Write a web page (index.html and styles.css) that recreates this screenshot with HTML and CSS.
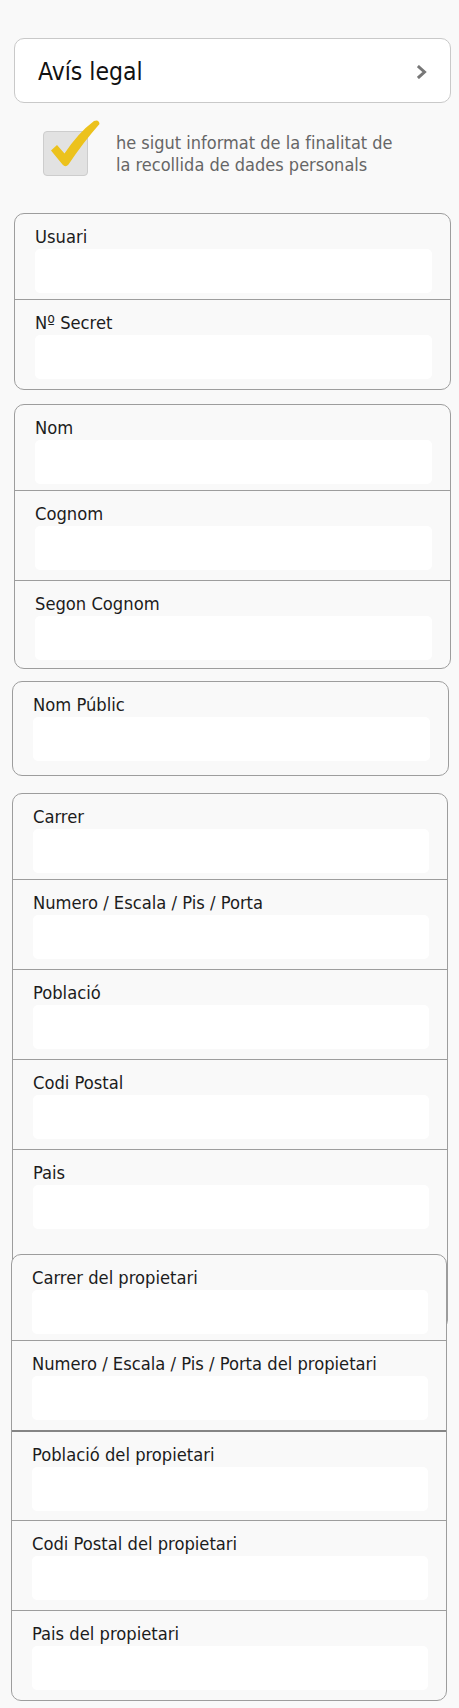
FILE: index.html
```html
<!DOCTYPE html>
<html lang="ca">
<head>
<meta charset="utf-8">
<title>Registre</title>
<link rel="stylesheet" href="styles.css">
</head>
<body>
<main class="page">
  <a class="link-row" href="#">
    <span>Avís legal</span>
    <svg class="chevron" width="10" height="14" viewBox="0 0 10 14"><path d="M2 2 L7.5 7 L2 12" fill="none" stroke="#777" stroke-width="3" stroke-linecap="square" stroke-linejoin="miter"/></svg>
  </a>

  <div class="consent">
    <span class="check">
      <svg width="60" height="62" viewBox="0 0 60 62"><path d="M7 33.5 L13 28 L20.5 36.5 Q34 16 50 4 Q55 2 55.5 7 Q39.5 25 24.5 47.5 Q21.5 51 18.5 47.5 Z" fill="#ecc21c"/></svg>
    </span>
    <p>he sigut informat de la finalitat de la recollida de dades personals</p>
  </div>

  <section class="group group--login">
    <div class="field"><label>Usuari</label><input class="input" type="text"></div>
    <div class="field"><label>Nº Secret</label><input class="input" type="password"></div>
  </section>

  <section class="group group--name">
    <div class="field"><label>Nom</label><input class="input" type="text"></div>
    <div class="field"><label>Cognom</label><input class="input" type="text"></div>
    <div class="field field--tight"><label>Segon Cognom</label><input class="input" type="text"></div>
  </section>

  <section class="group group--public">
    <div class="field field--single"><label>Nom Públic</label><input class="input" type="text"></div>
  </section>

  <section class="group group--address">
    <div class="field"><label>Carrer</label><input class="input" type="text"></div>
    <div class="field"><label>Numero / Escala / Pis / Porta</label><input class="input" type="text"></div>
    <div class="field"><label>Població</label><input class="input" type="text"></div>
    <div class="field"><label>Codi Postal</label><input class="input" type="text"></div>
    <div class="field"><label>Pais</label><input class="input" type="text"></div>
  </section>

  <section class="group group--owner">
    <div class="field"><label>Carrer del propietari</label><input class="input" type="text"></div>
    <div class="field"><label>Numero / Escala / Pis / Porta del propietari</label><input class="input" type="text"></div>
    <div class="field field--strong"><label>Població del propietari</label><input class="input" type="text"></div>
    <div class="field"><label>Codi Postal del propietari</label><input class="input" type="text"></div>
    <div class="field"><label>Pais del propietari</label><input class="input" type="text"></div>
  </section>
</main>
</body>
</html>
```
FILE: styles.css
```css
html, body {
  margin: 0;
  background: #f9f9f9;
}

body {
  font-family: "DejaVu Sans Condensed", "DejaVu Sans", Verdana, sans-serif;
  font-stretch: condensed;
  color: #1c1c1c;
}

.page {
  padding: 38px 0 6px;
}

.link-row {
  display: flex;
  align-items: center;
  justify-content: space-between;
  height: 65px;
  box-sizing: border-box;
  margin: 0 8px 0 14px;
  padding: 2px 23px 0 23px;
  background: #fff;
  border: 1px solid #c9c9c9;
  border-radius: 10px;
  font-size: 24.5px;
  color: #111;
  text-decoration: none;
}

.chevron {
  display: block;
  flex: none;
}

.consent {
  display: flex;
  align-items: flex-start;
  margin: 28px 0 0 43px;
}

.check {
  position: relative;
  flex: none;
  width: 45px;
  height: 45px;
  box-sizing: border-box;
  border: 1px solid #cdcdcd;
  background: #e2e2e2;
  border-radius: 4px;
}

.check svg {
  position: absolute;
  left: 0;
  top: -15px;
}

.consent p {
  margin: 1px 0 0 28px;
  width: 280px;
  font-size: 18px;
  line-height: 22px;
  color: #666;
}

.group {
  position: relative;
  margin: 0 8px 0 14px;
  border: 1px solid #9d9d9d;
  border-radius: 10px;
  background: #f9f9f9;
}

.field {
  padding: 12px 18px 10px 20px;
}

.field:first-child {
  padding-bottom: 6px;
}

.field + .field {
  border-top: 1px solid #9d9d9d;
}

.field label {
  display: block;
  font-size: 18.2px;
  line-height: 21px;
  margin-bottom: 2px;
}

.input {
  display: block;
  width: 100%;
  height: 44px;
  margin: 0;
  padding: 0 10px;
  box-sizing: border-box;
  border: 0;
  border-radius: 5px;
  background: #fff;
  font: inherit;
  outline: none;
}

.field--tight {
  padding-bottom: 8px;
}

.field--single:first-child {
  padding-bottom: 14px;
}

.field + .field--strong {
  border-top: 2px solid #858585;
  padding-bottom: 9px;
}

.group--login {
  margin-top: 37px;
}

.group--name {
  margin-top: 14px;
}

.group--public {
  margin: 12px 10px 0 12px;
}

.group--address {
  margin: 17px 11px 0 12px;
  padding-bottom: 90px;
}

.group--owner {
  margin: -76px 12px 0 11px;
}
```
